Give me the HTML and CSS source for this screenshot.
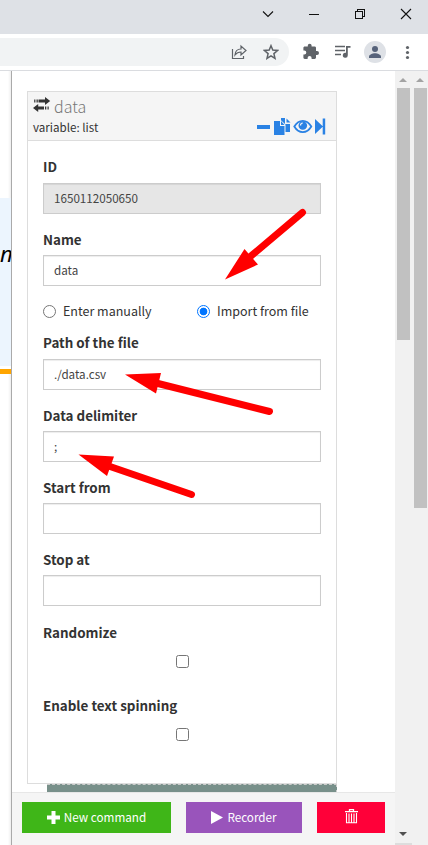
FILE: index.html
```html
<!DOCTYPE html>
<html lang="en">
<head>
<meta charset="utf-8">
<title>data</title>
<link rel="stylesheet" href="styles.css">
</head>
<body>
<div class="window">
  <header class="titlebar">
    <svg width="160" height="34" viewBox="260 0 160 34" fill="none" stroke="#111" stroke-width="1.1">
      <path d="M263 11.5l5 5 5-5"/>
      <path d="M309 14.5h10" shape-rendering="crispEdges"/>
      <path d="M355.500 11.500h7v7h-7zM357.500 11.500v-2h7v7h-2" shape-rendering="crispEdges"/>
      <path d="M401 9l10 10M411 9l-10 10"/>
    </svg>
  </header>
  <div class="toolbar">
    <div class="omnibox">
      <svg width="16" height="16" viewBox="0 0 16 16" fill="none" stroke="#5f6368" stroke-width="1.200"><path d="M1.500 5v9.500h11v-2.500M4 11c.3-4.500 2.500-6 6-6V2l5 4.500-5 4.500V8c-3 0-4.500 1-6 3z"/></svg>
      <svg class="star" width="16" height="16" viewBox="0 0 16 16" fill="none" stroke="#5f6368" stroke-width="1.500"><path d="M8 1.700l1.800 4.400 4.700.4-3.600 3.100 1.100 4.700L8 11.800l-4 2.500 1.100-4.700-3.600-3.100 4.700-.4z"/></svg>
    </div>
    <svg class="tools" width="125" height="36" viewBox="300 34 125 36">
      <path fill="#5f6368" d="M317 51h-1v-3.200c0-.8-.6-1.400-1.400-1.400h-3v-.8a1.900 1.900 0 0 0-3.800 0v.8h-3c-.8 0-1.400.6-1.400 1.400v2.700h.9a2 2 0 0 1 0 4h-.9v3c0 .8.6 1.400 1.400 1.400h2.800V58a2 2 0 0 1 4 0v.9h3c.8 0 1.400-.6 1.400-1.400V55h1a2 2 0 0 0 0-4z"/>
      <path d="M335 46.500h10M335 50.500h10M335 54.500h6" stroke="#5f6368" stroke-width="1.500" fill="none"/>
      <path d="M346 46h4.500v1.800h-2.700v7.400a2.500 2.500 0 1 1-1.800-2.400z" fill="#5f6368"/>
      <circle cx="375" cy="52" r="11" fill="#dee1e6"/>
      <circle cx="375" cy="49" r="3" fill="#56627a"/><path d="M369 58v-1.500c0-2 3.500-3.300 6-3.300s6 1.300 6 3.300V58z" fill="#56627a"/>
      <g fill="#5f6368"><circle cx="407.500" cy="47.500" r="1.600"/><circle cx="407.500" cy="52.500" r="1.600"/><circle cx="407.500" cy="57.500" r="1.600"/></g>
    </svg>
  </div>
  <main class="content">
    <aside class="page"><div class="quote">n</div></aside>
    <section class="panel">
      <div class="viewport">
        <div class="card">
          <div class="card-head">
            <div class="title">
              <svg width="18" height="16" viewBox="0 0 18 16" fill="#333"><path d="M5.500 2.500H12V0l5.200 4L12 8V5.500H5.500zM3.500 2.500h1.300v3H3.500zM1.200 2.500h1.200v3H1.200zM11 9.500H5.200V7L0 11l5.200 4v-2.500H11zM12 9.500h1.300v3H12zM14.500 9.500h1.200v3h-1.200z"/></svg>
              <span>data</span>
            </div>
            <div class="sub">
              <span>variable: list</span>
              <svg width="70" height="18" viewBox="256 117 70 18" fill="#2a82e4">
                <path d="M257 125h13v4h-13z"/>
                <path d="M274 121h6v5h4.500v9H274zM281 121l3.500 4H281zM281 118h4v6h5v8h-4.500v-7.500l-4.500-4.300zM286.500 118.500l4 4h-4z"/>
                <path d="M294.300 126.500c4.500-7.500 12.500-7.500 17 0-4.500 7.500-12.500 7.500-17 0z" fill="#f5f5f5" stroke="#2a82e4" stroke-width="1.800"/>
                <circle cx="302.800" cy="125.500" r="4.300"/><path d="M300.500 125.500a2.500 2.500 0 0 1 2.300-2.500" fill="none" stroke="#f5f5f5" stroke-width="1.200"/>
                <path d="M315 119l8 7.500-8 7.500zM322.700 118.500h2.500v16h-2.500z"/>
              </svg>
            </div>
          </div>
          <form class="form">
            <div class="field raised"><label>ID</label><div class="input disabled">1650112050650</div></div>
            <div class="field"><label>Name</label><div class="input">data</div></div>
            <div class="radios">
              <span class="radio"><i class="dot"></i><span>Enter manually</span></span>
              <span class="radio"><i class="dot on"></i><span>Import from file</span></span>
            </div>
            <div class="field raised"><label>Path of the file</label><div class="input">./data.csv</div></div>
            <div class="field"><label>Data delimiter</label><div class="input">;</div></div>
            <div class="field"><label>Start from</label><div class="input"></div></div>
            <div class="field"><label>Stop at</label><div class="input"></div></div>
            <div class="field raised check"><label>Randomize</label><i class="box"></i></div>
            <div class="field raised check"><label>Enable text spinning</label><i class="box"></i></div>
          </form>
        </div>
        <div class="next"></div>
      </div>
      <footer class="actions">
        <div class="btn green"><svg width="13" height="13" viewBox="0 0 13 13" fill="#fff"><path d="M4.500 0h4v4.500H13v4H8.500V13h-4V8.500H0v-4h4.500z"/></svg>New command</div>
        <div class="btn purple"><svg width="12" height="13" viewBox="0 0 12 13" fill="#fff"><path d="M0 0l12 6.500L0 13z"/></svg>Recorder</div>
        <div class="btn red"><svg width="13" height="15" viewBox="0 0 13 15" fill="none" stroke="#fff"><path d="M4.500 2V.7h4V2M0 2.700h13" stroke-width="1.300"/><path d="M1.500 4v9.800h10V4M4 4.500v9M6.500 4.500v9M9 4.500v9" stroke-width="1.100"/></svg></div>
      </footer>
    </section>
    <div class="scroll inner"><i class="up"></i><i class="thumb"></i><i class="down"></i><i class="corner"></i></div>
    <div class="scroll outer"><i class="up"></i><i class="thumb"></i></div>
  </main>
  <svg class="arrows" width="428" height="845" viewBox="0 0 428 845" fill="#f00" stroke="#f00">
    <g stroke-width="7" stroke-linecap="round"><path d="M302.500 212.500L251 256M269.500 411.500L158 383.500M191.500 494.500L110 466.500"/></g>
    <g stroke="none"><path d="M225 279.500L244.500 249l13.500 15.500zM125 374.500l36-1.500-5 20.500zM78.500 454.500L114 456.500l-7 19.500z"/></g>
  </svg>
</div>
</body>
</html>
```

FILE: styles.css
```css
* { box-sizing: border-box; }
body { margin: 0; background: #fff; color: #333; font-family: "Noto Sans CJK SC", "Noto Sans", sans-serif; }
svg { display: block; flex: none; }
.window { position: relative; width: 428px; height: 845px; overflow: hidden; display: flex; flex-direction: column; }
.titlebar { height: 34px; flex: none; background: #dee1e6; display: flex; justify-content: flex-end; padding-right: 8px; }
.toolbar { height: 37px; flex: none; display: flex; border-bottom: 1px solid #dadce0; }
.omnibox { width: 289px; height: 28px; margin-top: 4px; padding-right: 10px; background: #f1f3f4; border-radius: 0 14px 14px 0; display: flex; align-items: center; justify-content: flex-end; gap: 16px; }
.tools { margin-left: 11px; }
.content { flex: 1; display: flex; min-height: 0; }
.page { width: 12px; flex: none; overflow: hidden; border-right: 1px solid #aaa; padding-top: 127px; background: linear-gradient(to right, transparent 8px, #0001); }
.quote { height: 176px; border-bottom: 5px solid orange; background: linear-gradient(#ecf5fe 168px, #fff 168px); color: #000; font: italic 22px/30px "Noto Sans", sans-serif; padding-top: 40px; }
.panel { width: 383px; flex: none; display: flex; flex-direction: column; }
.viewport { height: 721px; padding: 20px 0 0 15px; overflow: hidden; }
.card { width: 310px; height: 693px; border: 1px solid #ddd; }
.card-head { height: 49px; background: #f5f5f5; border-bottom: 1px solid #ddd; padding: 5px 10px 0 5px; }
.title { display: flex; height: 20px; gap: 3px; color: #777; font-size: 16px; font-weight: 300; line-height: 19px; }
.sub { display: flex; justify-content: space-between; height: 18px; font-size: 11.6px; line-height: 20px; }
.form { padding: 16px 15px 0; font-size: 13px; }
.field { height: 72.3px; }
.field label { display: block; height: 26px; font-size: 13.4px; font-weight: 700; line-height: 20px; }
.raised label { line-height: 18px; }
.input { height: 31px; border: 1px solid #ccc; box-shadow: inset 0 1px 1px #00000013; padding-left: 10px; font-size: 11.65px; line-height: 28px; color: #444; }
.disabled { background: #e6e6e6; }
.radios { height: 31px; display: flex; font-size: 12.5px; line-height: 20px; }
.radio { width: 154px; height: 20px; display: flex; align-items: center; gap: 7px; white-space: nowrap; flex: none; }
.radio span { padding-bottom: 2px; }
.dot { width: 13px; height: 13px; border: 1px solid #767676; border-radius: 50%; }
.dot.on { border-color: #0075ff; background: radial-gradient(circle, #0075ff 3.5px, #fff 4.2px); }
.check { height: 73px; position: relative; top: 1px; }
.box { display: block; width: 13px; height: 13px; border: 1px solid #767676; border-radius: 2.5px; margin: 6px 0 0 133px; }
.next { height: 9px; width: 290px; margin-left: 20px; background: #78908a; border-top: 1px dashed #ccc; border-right: 1px dashed #ccc; }
.actions { height: 53px; flex: none; background: #f5f5f5; border-top: 1px solid #e7e7e7; padding: 9px 10px 0; display: flex; gap: 15px; }
.btn { height: 31px; padding-bottom: 1px; display: flex; align-items: center; justify-content: center; gap: 4px; color: #fff; font-size: 11.7px; font-weight: 400; line-height: 28px; }
.green { width: 149px; background: #3fb618; }
.purple { width: 116px; background: #9954bb; }
.red { width: 68px; background: #ff0039; padding-bottom: 2px; }
.scroll { width: 17px; flex: none; background: #f1f1f1; padding: 7px 2px 0; display: flex; flex-direction: column; }
.outer { width: 16px; padding-right: 1px; }
.thumb { height: 252px; background: #c1c1c1; margin-top: 6px; }
.outer .thumb { height: 420px; }
.up, .down { width: 8px; height: 4px; margin-left: 2px; background: #a3a3a3; clip-path: polygon(50% 0, 100% 100%, 0 100%); }
.down { margin-top: auto; background: #505050; clip-path: polygon(0 0, 100% 0, 50% 100%); }
.corner { width: 17px; height: 2px; margin: 7px 0 0 -2px; background: #ddd; }
.arrows { position: absolute; left: 0; top: 0; pointer-events: none; }
```
